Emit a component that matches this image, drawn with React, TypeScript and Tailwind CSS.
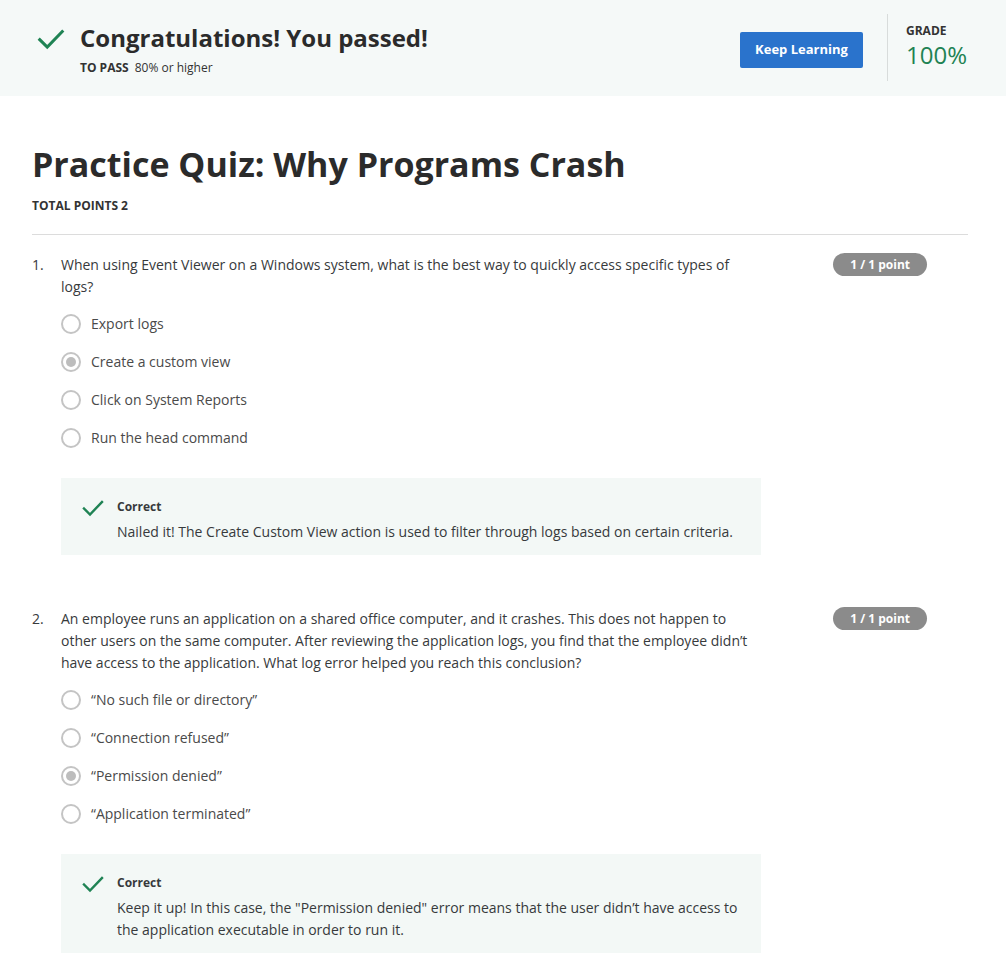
import React from "react";

const font = { fontFamily: '"Open Sans", "Noto Sans", sans-serif' };

function Check({ size = 28 }: { size?: number }) {
  return (
    <svg width={size} height={size} viewBox="0 0 24 24" fill="none">
      <path d="M3 12.5 L9 18.5 L21 6" stroke="#1f8354" strokeWidth="2.4" strokeLinecap="square" />
    </svg>
  );
}

function Radio({ selected }: { selected?: boolean }) {
  return (
    <span className="flex h-[20px] w-[20px] shrink-0 items-center justify-center rounded-full border-2 border-[#c4c4c4] bg-white">
      {selected && <span className="h-[10px] w-[10px] rounded-full bg-[#bdbdbd]" />}
    </span>
  );
}

type Q = {
  n: number;
  text: string;
  options: string[];
  selected: number;
  feedback: string;
};

const questions: Q[] = [
  {
    n: 1,
    text: "When using Event Viewer on a Windows system, what is the best way to quickly access specific types of logs?",
    options: ["Export logs", "Create a custom view", "Click on System Reports", "Run the head command"],
    selected: 1,
    feedback: "Nailed it! The Create Custom View action is used to filter through logs based on certain criteria.",
  },
  {
    n: 2,
    text: "An employee runs an application on a shared office computer, and it crashes. This does not happen to other users on the same computer. After reviewing the application logs, you find that the employee didn\u2019t have access to the application. What log error helped you reach this conclusion?",
    options: [
      "\u201cNo such file or directory\u201d",
      "\u201cConnection refused\u201d",
      "\u201cPermission denied\u201d",
      "\u201cApplication terminated\u201d",
    ],
    selected: 2,
    feedback:
      'Keep it up! In this case, the "Permission denied" error means that the user didn\u2019t have access to the application executable in order to run it.',
  },
];

function Question({ q }: { q: Q }) {
  return (
    <div className="flex">
      <div className="w-[29px] shrink-0 text-[14px] leading-[22px] text-[#373a3c]">{q.n}.</div>
      <div className="w-[700px] shrink-0">
        <p className="text-[14px] leading-[22px] text-[#373a3c] pr-[8px]">{q.text}</p>
        <div className="mt-[16px] flex flex-col gap-[18px]">
          {q.options.map((o, i) => (
            <div key={i} className="flex h-[20px] items-center gap-[10px]">
              <Radio selected={i === q.selected} />
              <span className="text-[14px] leading-[20px] text-[#4a4a4a]">{o}</span>
            </div>
          ))}
        </div>
        <div className="mt-[30px] flex gap-[12px] bg-[#f3f8f6] pl-[20px] pr-[14px] pt-[20px] pb-[12px]">
          <div className="mt-[-2px]">
            <Check size={24} />
          </div>
          <div>
            <div className="text-[12px] font-bold leading-[18px] text-[#373a3c]">Correct</div>
            <div className="mt-[5px] text-[14px] leading-[22px] text-[#373a3c]">{q.feedback}</div>
          </div>
        </div>
      </div>
      <div className="flex flex-1 justify-end pr-[47px]">
        <span className="mt-[-1px] h-[23px] rounded-full bg-[#8b8b8b] px-[17px] text-[12px] font-bold leading-[23px] text-white">
          1 / 1 point
        </span>
      </div>
    </div>
  );
}

export default function App() {
  return (
    <div style={font} className="min-h-[963px] w-[1006px] bg-white">
      <div className="flex h-[96px] items-start bg-[#f5f9f8] pl-[36px] pr-[38px]">
        <div className="flex flex-1 items-start">
          <div className="mt-[24px]">
            <Check size={30} />
          </div>
          <div className="ml-[14px] mt-[22px]">
            <div className="text-[24px] font-bold leading-[32px] text-[#2b2b2b]">Congratulations! You passed!</div>
            <div className="mt-[6px] text-[12px] leading-[16px] text-[#333]">
              <span className="font-bold">TO PASS</span>
              <span className="ml-[6px]">80% or higher</span>
            </div>
          </div>
        </div>
        <button className="mt-[32px] h-[36px] w-[123px] rounded-[2px] bg-[#2a73cc] text-[13px] font-bold text-white">
          Keep Learning
        </button>
        <div className="ml-[24px] mt-[14px] h-[67px] w-px bg-[#d8dcdb]" />
        <div className="ml-[18px] mt-[24px] w-[62px]">
          <div className="text-[12px] font-bold leading-[14px] text-[#333]">GRADE</div>
          <div className="text-[24px] leading-[33px] text-[#1f8354]">100%</div>
        </div>
      </div>

      <div className="px-[32px] pt-[46px]">
        <h1 className="text-[34px] font-bold leading-[44px] text-[#2b2b2b]">Practice Quiz: Why Programs Crash</h1>
        <div className="mt-[12px] text-[12px] font-bold leading-[16px] text-[#333]">TOTAL POINTS 2</div>
        <div className="mt-[20px] h-px w-[936px] bg-[#dcdcdc]" />
        <div className="mt-[19px] flex flex-col gap-[53px]">
          {questions.map((q) => (
            <Question key={q.n} q={q} />
          ))}
        </div>
      </div>
    </div>
  );
}
